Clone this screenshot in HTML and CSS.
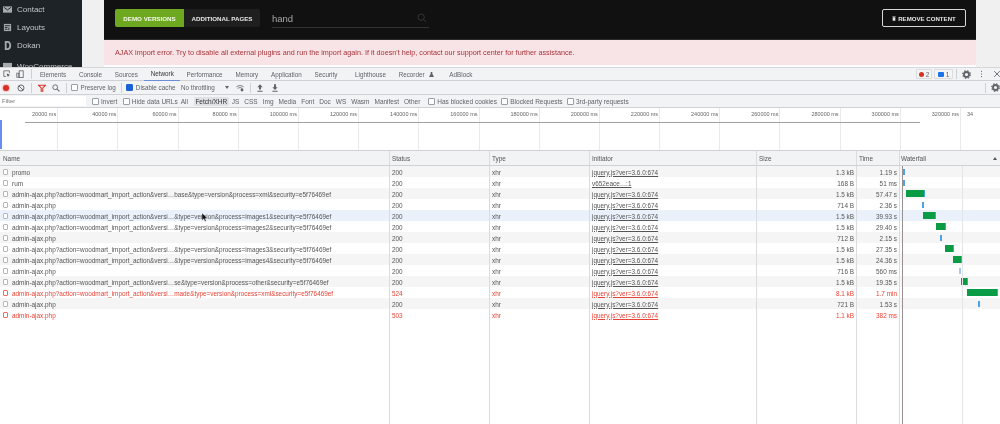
FILE: index.html
```html
<!DOCTYPE html>
<html lang="en">
<head>
<meta charset="utf-8">
<title>Import - Network</title>
<link rel="stylesheet" href="styles.css">
</head>
<body>
<div class="page">
  <section class="site">
    <nav class="side">
      <div class="side-item"><svg class="side-ico" viewBox="0 0 10 10"><path d="M0 1.500h10v7H0z" fill="#a7aaad"/><path d="M1 2.500l4 3 4-3" fill="none" stroke="#1d2327"/></svg>Contact</div>
      <div class="side-item"><svg class="side-ico" viewBox="0 0 10 10"><path d="M1 1h8v8H1z" fill="#a7aaad"/><path d="M2 3h6M2 5h3M2 7h3M6.500 5v3" stroke="#1d2327" fill="none"/></svg>Layouts</div>
      <div class="side-item"><svg class="side-ico" viewBox="0 0 10 10"><path d="M2 0h3c3 0 4 2.500 4 5s-1 5-4 5H2zM4 2v6h1c1.500 0 2-1.500 2-3s-.5-3-2-3z" fill="#a7aaad"/></svg>Dokan</div>
      <div class="side-item side-last"><svg class="side-ico" viewBox="0 0 10 10"><path d="M0 1h10v8H0z" fill="#a7aaad"/></svg>WooCommerce</div>
    </nav>
    <main class="main">
      <div class="panel">
        <div class="btn-green">DEMO VERSIONS</div>
        <div class="btn-dark">ADDITIONAL PAGES</div>
        <div class="search"><span>hand</span><svg class="search-ico" viewBox="0 0 12 12"><circle cx="5" cy="5" r="3.800" fill="none" stroke="#3c3c3c"/><path d="M8 8l3 3" stroke="#3c3c3c"/></svg></div>
        <div class="btn-remove"><svg class="trash" viewBox="0 0 6 7"><path d="M.5 0h5v1h-5zM1 1.500h4V7H1z" fill="#e8e8e8"/></svg>REMOVE CONTENT</div>
      </div>
      <div class="alert">AJAX import error. Try to disable all external plugins and run the import again. If it doesn't help, contact our support center for further assistance.</div>
    </main>
  </section>

  <section class="devtools">
    <div class="tabs">
      <svg class="ico ico-inspect" viewBox="0 0 10 10"><path d="M1 1h7v3M1 1v7h3" fill="none" stroke="#5f6368"/><path d="M4.500 4.500l4.500 1.800-2 .7-.7 2z" fill="#444"/></svg>
      <svg class="ico ico-device" viewBox="0 0 10 10"><rect x="4" y="1" width="5" height="8.500" fill="none" stroke="#5f6368"/><rect x="1" y="4" width="2.500" height="5" fill="none" stroke="#5f6368"/></svg>
      <span class="vsep vsep-tabs"></span>
      <span class="tab">Elements</span>
      <span class="tab">Console</span>
      <span class="tab">Sources</span>
      <span class="tab tab-active">Network</span>
      <span class="tab">Performance</span>
      <span class="tab">Memory</span>
      <span class="tab">Application</span>
      <span class="tab tab-security">Security</span>
      <span class="tab">Lighthouse</span>
      <span class="tab tab-recorder">Recorder<svg class="flask" viewBox="0 0 6 6"><path d="M2 0h2v2l2 4H0l2-4z" fill="#5f6368"/></svg></span>
      <span class="tab">AdBlock</span>
      <span class="tabs-end">
        <span class="badge badge-err"><i class="dot-red"></i>2</span>
        <span class="badge badge-msg"><i class="dot-blue"></i>1</span>
        <span class="vsep"></span>
        <svg class="ico gear" viewBox="0 0 10 10"><circle cx="5" cy="5" r="2.800" fill="none" stroke="#5f6368" stroke-width="2"/><circle cx="5" cy="5" r="4.300" fill="none" stroke="#5f6368" stroke-width="1.200" stroke-dasharray="1.700 1.700"/></svg>
        <svg class="ico dots" viewBox="0 0 4 10"><path d="M2 .8v1.400M2 4.300v1.400M2 7.800v1.400" stroke="#5f6368" stroke-width="1.300"/></svg>
        <svg class="ico close" viewBox="0 0 10 10"><path d="M1.500 1.500l7 7M8.500 1.500l-7 7" stroke="#5f6368" stroke-width="1.100"/></svg>
      </span>
    </div>

    <div class="toolbar">
      <i class="rec"></i>
      <svg class="ico stop" viewBox="0 0 10 10"><circle cx="5" cy="5" r="3.800" fill="none" stroke="#5f6368" stroke-width="1.200"/><path d="M2.500 2.500l5 5" stroke="#5f6368" stroke-width="1.200"/></svg>
      <span class="vsep"></span>
      <svg class="ico funnel" viewBox="0 0 10 10"><path d="M.5 1.500h9L6 5v4H4V5z" fill="none" stroke="#d93025" stroke-width="1.300"/></svg>
      <svg class="ico lens" viewBox="0 0 10 10"><circle cx="4" cy="4" r="3" fill="none" stroke="#5f6368" stroke-width="1.100"/><path d="M6.300 6.300l3 3" stroke="#5f6368" stroke-width="1.300"/></svg>
      <span class="vsep"></span>
      <label class="check check-preserve"><i class="box"></i>Preserve log</label>
      <span class="vsep"></span>
      <label class="check check-cache"><i class="box box-on"></i>Disable cache</label>
      <span class="throttle">No throttling</span>
      <i class="caret"></i>
      <svg class="ico wifi" viewBox="0 0 10 10"><path d="M.5 3.500c2.500-2 6.500-2 9 0M2 5.500c2-1.300 4-1.300 6 0" fill="none" stroke="#5f6368"/><circle cx="7.500" cy="7.500" r="1.800" fill="#5f6368"/></svg>
      <span class="vsep"></span>
      <svg class="ico arrow" viewBox="0 0 8 10"><path d="M4 0l3.500 4H5.300v3H2.700V4H.5zM.5 8.500h7V10h-7z" fill="#5f6368"/></svg>
      <svg class="ico arrow arrow-down" viewBox="0 0 8 10"><path d="M2.700 0h2.600v4h2.200L4 7.500.5 4h2.200zM.5 8.500h7V10h-7z" fill="#5f6368"/></svg>
      <span class="toolbar-end"><span class="vsep"></span><svg class="ico gear" viewBox="0 0 10 10"><circle cx="5" cy="5" r="2.800" fill="none" stroke="#5f6368" stroke-width="2"/><circle cx="5" cy="5" r="4.300" fill="none" stroke="#5f6368" stroke-width="1.200" stroke-dasharray="1.700 1.700"/></svg></span>
    </div>

    <div class="filterbar">
      <span class="filter-input">Filter</span>
      <label class="fcheck fcheck-invert"><i class="box"></i>Invert</label>
      <label class="fcheck fcheck-hide"><i class="box"></i>Hide data URLs</label>
      <span class="ftype">All</span>
      <span class="ftype ftype-on">Fetch/XHR</span>
      <span class="ftype">JS</span>
      <span class="ftype">CSS</span>
      <span class="ftype">Img</span>
      <span class="ftype">Media</span>
      <span class="ftype">Font</span>
      <span class="ftype">Doc</span>
      <span class="ftype">WS</span>
      <span class="ftype">Wasm</span>
      <span class="ftype">Manifest</span>
      <span class="ftype">Other</span>
      <label class="fcheck fcheck-far"><i class="box"></i>Has blocked cookies</label>
      <label class="fcheck fcheck-near"><i class="box"></i>Blocked Requests</label>
      <label class="fcheck fcheck-near"><i class="box"></i>3rd-party requests</label>
    </div>

    <div class="overview">
      <div class="ticks">
        <span>20000 ms</span><span>40000 ms</span><span>60000 ms</span><span>80000 ms</span><span>100000 ms</span><span>120000 ms</span><span>140000 ms</span><span>160000 ms</span><span>180000 ms</span><span>200000 ms</span><span>220000 ms</span><span>240000 ms</span><span>260000 ms</span><span>280000 ms</span><span>300000 ms</span><span>320000 ms</span><span class="tick-last">34</span>
      </div>
      <i class="ov-line"></i>
      <i class="ov-blue"></i>
    </div>

    <div class="table">
      <div class="row head">
        <div class="c name">Name</div><div class="c">Status</div><div class="c">Type</div><div class="c">Initiator</div><div class="c">Size</div><div class="c">Time</div>
        <div class="c wf">Waterfall<i class="sort"></i></div>
      </div>
      <div class="row odd"><div class="c name"><i class="doc"></i>promo</div><div class="c">200</div><div class="c">xhr</div><div class="c"><u>jquery.js?ver=3.6.0:674</u></div><div class="c num">1.3 kB</div><div class="c num">1.19 s</div><div class="c wf"><i class="bar bar-blue" style="margin-left:3px"></i></div></div>
      <div class="row"><div class="c name"><i class="doc"></i>rum</div><div class="c">200</div><div class="c">xhr</div><div class="c"><u>v652eace…:1</u></div><div class="c num">168 B</div><div class="c num">51 ms</div><div class="c wf"><i class="bar bar-blue" style="margin-left:3px"></i></div></div>
      <div class="row odd"><div class="c name"><i class="doc"></i>admin-ajax.php?action=woodmart_import_action&amp;versi…base&amp;type=version&amp;process=xml&amp;security=e5f76469ef</div><div class="c">200</div><div class="c">xhr</div><div class="c"><u>jquery.js?ver=3.6.0:674</u></div><div class="c num">1.5 kB</div><div class="c num">57.47 s</div><div class="c wf"><i class="bar bar-green" style="margin-left:6px;width:19px"></i></div></div>
      <div class="row"><div class="c name"><i class="doc"></i>admin-ajax.php</div><div class="c">200</div><div class="c">xhr</div><div class="c"><u>jquery.js?ver=3.6.0:674</u></div><div class="c num">714 B</div><div class="c num">2.36 s</div><div class="c wf"><i class="bar bar-blue" style="margin-left:22px"></i></div></div>
      <div class="row hover"><div class="c name"><i class="doc"></i>admin-ajax.php?action=woodmart_import_action&amp;versi…&amp;type=version&amp;process=images1&amp;security=e5f76469ef</div><div class="c">200</div><div class="c">xhr</div><div class="c"><u>jquery.js?ver=3.6.0:674</u></div><div class="c num">1.5 kB</div><div class="c num">39.93 s</div><div class="c wf"><i class="bar bar-green" style="margin-left:23px;width:13px"></i></div></div>
      <div class="row"><div class="c name"><i class="doc"></i>admin-ajax.php?action=woodmart_import_action&amp;versi…&amp;type=version&amp;process=images2&amp;security=e5f76469ef</div><div class="c">200</div><div class="c">xhr</div><div class="c"><u>jquery.js?ver=3.6.0:674</u></div><div class="c num">1.5 kB</div><div class="c num">29.40 s</div><div class="c wf"><i class="bar bar-green" style="margin-left:36px;width:10px"></i></div></div>
      <div class="row odd"><div class="c name"><i class="doc"></i>admin-ajax.php</div><div class="c">200</div><div class="c">xhr</div><div class="c"><u>jquery.js?ver=3.6.0:674</u></div><div class="c num">712 B</div><div class="c num">2.15 s</div><div class="c wf"><i class="bar bar-blue" style="margin-left:40px"></i></div></div>
      <div class="row"><div class="c name"><i class="doc"></i>admin-ajax.php?action=woodmart_import_action&amp;versi…&amp;type=version&amp;process=images3&amp;security=e5f76469ef</div><div class="c">200</div><div class="c">xhr</div><div class="c"><u>jquery.js?ver=3.6.0:674</u></div><div class="c num">1.5 kB</div><div class="c num">27.35 s</div><div class="c wf"><i class="bar bar-green" style="margin-left:45px;width:9px"></i></div></div>
      <div class="row odd"><div class="c name"><i class="doc"></i>admin-ajax.php?action=woodmart_import_action&amp;versi…&amp;type=version&amp;process=images4&amp;security=e5f76469ef</div><div class="c">200</div><div class="c">xhr</div><div class="c"><u>jquery.js?ver=3.6.0:674</u></div><div class="c num">1.5 kB</div><div class="c num">24.36 s</div><div class="c wf"><i class="bar bar-green" style="margin-left:53px;width:9px"></i></div></div>
      <div class="row"><div class="c name"><i class="doc"></i>admin-ajax.php</div><div class="c">200</div><div class="c">xhr</div><div class="c"><u>jquery.js?ver=3.6.0:674</u></div><div class="c num">716 B</div><div class="c num">560 ms</div><div class="c wf"><i class="bar bar-pale" style="margin-left:59px"></i></div></div>
      <div class="row odd"><div class="c name"><i class="doc"></i>admin-ajax.php?action=woodmart_import_action&amp;versi…se&amp;type=version&amp;process=other&amp;security=e5f76469ef</div><div class="c">200</div><div class="c">xhr</div><div class="c"><u>jquery.js?ver=3.6.0:674</u></div><div class="c num">1.5 kB</div><div class="c num">19.35 s</div><div class="c wf"><i class="bar bar-green" style="margin-left:61px;width:7px"></i></div></div>
      <div class="row err"><div class="c name"><i class="doc"></i>admin-ajax.php?action=woodmart_import_action&amp;versi…made&amp;type=version&amp;process=xml&amp;security=e5f76469ef</div><div class="c">524</div><div class="c">xhr</div><div class="c"><u>jquery.js?ver=3.6.0:674</u></div><div class="c num">8.1 kB</div><div class="c num">1.7 min</div><div class="c wf"><i class="bar bar-green" style="margin-left:67px;width:31px"></i></div></div>
      <div class="row odd"><div class="c name"><i class="doc"></i>admin-ajax.php</div><div class="c">200</div><div class="c">xhr</div><div class="c"><u>jquery.js?ver=3.6.0:674</u></div><div class="c num">721 B</div><div class="c num">1.53 s</div><div class="c wf"><i class="bar bar-blue" style="margin-left:78px"></i></div></div>
      <div class="row err"><div class="c name"><i class="doc"></i>admin-ajax.php</div><div class="c">503</div><div class="c">xhr</div><div class="c"><u>jquery.js?ver=3.6.0:674</u></div><div class="c num">1.1 kB</div><div class="c num">382 ms</div><div class="c wf"></div></div>
      <div class="row filler"><div class="c name"></div><div class="c"></div><div class="c"></div><div class="c"></div><div class="c"></div><div class="c"></div><div class="c wf"></div></div>
      <i class="wf-mark"></i>
      <i class="wf-grid"></i>
      <svg class="pointer" viewBox="0 0 6 9"><path d="M0 0v7.500l1.800-1.700L3 8.500l1.200-.5L3 5.300h2.500z" fill="#111" stroke="#fff" stroke-width=".4"/></svg>
    </div>
  </section>
</div>
</body>
</html>
```

FILE: styles.css
```css
* { box-sizing: border-box; }
html, body { margin: 0; padding: 0; background: #fff; }
body { width: 1000px; height: 424px; overflow: hidden; font-family: "Liberation Sans", Arial, sans-serif; }
.page { width: 1000px; height: 424px; display: flex; flex-direction: column; overflow: hidden; filter: blur(0.45px); }
i { display: block; font-style: normal; }

/* website above the devtools */
.site { height: 67px; flex: none; display: flex; background: #f0f0f1; overflow: hidden; }
.side { width: 82px; flex: none; background: #1d2327; color: #c3c4c7; font-size: 8px; }
.side-item { height: 18px; display: flex; align-items: center; padding-left: 3px; gap: 5px; white-space: nowrap; }
.side-last { margin-top: 3px; }
.side-ico { width: 9px; height: 9px; flex: none; }
.main { width: 872px; margin-left: 22px; flex: none; background: #fff; }
.panel { height: 40px; background: #111; border-bottom: 1px solid #2a2a2a; display: flex; align-items: flex-start; padding: 9px 10px 0 11px; }
.btn-green { width: 69px; height: 18px; background: #6da820; color: #f4f9e8; font-size: 6.200px; font-weight: 700; display: flex; align-items: center; justify-content: center; border-radius: 2px 0 0 2px; }
.btn-dark { width: 76px; height: 18px; background: #1f1f1f; color: #e6e6e6; font-size: 6.200px; font-weight: 700; display: flex; align-items: center; justify-content: center; border-radius: 0 2px 2px 0; }
.search { width: 157px; height: 19px; margin-left: 12px; border-bottom: 1px solid #333; color: #a8a8a8; font-size: 9.500px; display: flex; align-items: center; justify-content: space-between; padding-right: 2px; }
.search-ico { width: 10px; height: 10px; }
.btn-remove { width: 84px; height: 18px; margin-left: auto; border: 1px solid #d8d8d8; border-radius: 2px; color: #e8e8e8; font-size: 6.100px; font-weight: 700; display: flex; align-items: center; justify-content: center; gap: 2px; }
.trash { width: 4px; height: 5px; }
.alert { height: 25px; background: #f8e4e6; color: #a8343a; font-size: 7.230px; display: flex; align-items: center; padding-left: 11px; white-space: nowrap; }

/* devtools */
.devtools { flex: 1; display: flex; flex-direction: column; min-height: 0; font-size: 6.300px; color: #5f6368; background: #fff; }
.tabs { height: 14px; flex: none; background: #f1f3f4; border-top: 1px solid #d5d7da; border-bottom: 1px solid #cfd1d4; display: flex; align-items: center; padding-left: 3px; white-space: nowrap; }
.ico { flex: none; width: 8px; height: 8px; }
.ico-device { margin-left: 5px; }
.vsep { flex: none; width: 1px; height: 10px; background: #cdd0d4; display: block; }
.vsep-tabs { margin: 0 2px 0 6.500px; }
.tab { height: 13px; line-height: 13px; padding: 0 6.400px; display: flex; align-items: center; gap: 4px; }
.tab-security { margin-right: 5px; }
.tab-active { color: #333; border-bottom: 1px solid #6a8fd8; }
.flask { width: 5px; height: 5px; margin-right: 3px; }
.tabs-end { margin-left: auto; display: flex; align-items: center; }
.badge { height: 10px; border: 1px solid #dadce0; background: #f5f5f5; border-radius: 1px; display: flex; align-items: center; justify-content: center; gap: 1.500px; font-size: 6.500px; }
.badge-err { width: 16px; margin-right: 2px; }
.badge-msg { width: 19px; }
.dot-red { width: 5px; height: 5px; border-radius: 50%; background: #d93025; }
.dot-blue { width: 6px; height: 5px; background: #1a73e8; border-radius: 1px; }
.tabs-end .vsep { margin: 0 4.500px 0 2.700px; }
.gear { width: 9px; height: 9px; }
.dots { width: 3px; height: 8px; margin-left: 9.500px; }
.close { margin-left: 10px; margin-right: -1px; }

.toolbar { height: 14px; flex: none; background: #f1f3f4; border-bottom: 1px solid #cfd1d4; display: flex; align-items: center; padding-left: 3px; white-space: nowrap; }
.rec { width: 6px; height: 6px; border-radius: 50%; background: #d93025; box-shadow: 0 0 0 1px #f5c6c2; flex: none; }
.stop { margin-left: 8px; }
.toolbar .vsep { margin-left: 6px; margin-right: 6px; }
.funnel { margin-left: -.5px; }
.lens { margin-left: 6px; }
.check { display: flex; align-items: center; gap: 3px; }
.check-preserve { margin-left: -2px; margin-right: -1px; }
.check-cache { margin-left: -2px; }
.box { width: 7px; height: 7px; flex: none; background: #fff; border: 1px solid #9a9ea3; border-radius: 1px; }
.box-on { background: #1a62d6; border-color: #1a62d6; }
.throttle { margin-left: 5.500px; }
.caret { width: 0; height: 0; border-left: 2px solid transparent; border-right: 2px solid transparent; border-top: 3px solid #5f6368; margin-left: 10px; }
.wifi { margin-left: 7px; }
.arrow { width: 6px; }
.arrow-down { margin-left: 9px; }
.toolbar-end { margin-left: auto; display: flex; align-items: center; }
.toolbar-end .vsep { margin-right: 5px; }

.filterbar { height: 13px; flex: none; background: #f1f3f4; border-bottom: 1px solid #cfd1d4; display: flex; align-items: center; white-space: nowrap; font-size: 6.500px; }
.filter-input { width: 86px; height: 10px; line-height: 10px; background: #fff; padding-left: 2px; color: #777; font-size: 6px; }
.fcheck { display: flex; align-items: center; gap: 2px; margin-left: 5px; }
.fcheck-invert { margin-left: 6px; }
.fcheck-hide { margin-left: 5.500px; }
.fcheck-far { margin-left: 6px; }
.fcheck-near { margin-left: 4.300px; }
.ftype { padding: 0 2px; height: 9px; line-height: 9px; margin-left: 1px; }
.ftype-on { background: #dfe1e5; color: #333; padding: 0 1.500px; margin-left: 4px; border-radius: 2px; }

.overview { height: 43px; flex: none; position: relative; border-bottom: 1px solid #cfd1d4; overflow: hidden; background: #fff; }
.ticks { display: flex; height: 100%; margin-left: -2px; }
.ticks span { width: 60.200px; flex: none; height: 100%; border-right: 1px solid #e8eaed; text-align: right; padding: 0 1px 0 0; font-size: 5.500px; line-height: 12px; color: #666; }
.ticks span.tick-last { border-right: 0; text-align: left; padding-left: 6px; }
.ov-line { position: absolute; left: 25px; top: 13.500px; width: 895px; height: 1.500px; background: #a0a0a0; }
.ov-blue { position: absolute; left: 0; top: 12px; width: 1.500px; height: 29px; background: #6a8cf0; }

.table { flex: 1; position: relative; min-height: 0; overflow: hidden; background: #fff; }
.row { height: 11px; display: grid; grid-template-columns: 390px 100px 100px 167px 100px 43px 100px; align-items: stretch; color: #555; font-size: 6.400px; white-space: nowrap; }
.row.head { height: 15px; background: #f1f3f4; border-bottom: 1px solid #cfd1d4; color: #555; }
.row.odd { background: #f5f5f5; }
.row.hover { background: #eaf1fb; }
.row.err { color: #ea4335; }
.row.filler { height: 110px; }
.c { border-right: 1px solid #dadce0; padding: 1px 2px 0; display: flex; align-items: center; overflow: hidden; }
.head .c { padding-top: 0; }
.c.num { justify-content: flex-end; padding-right: 2px; }
.c.name { padding-left: 3px; }
.c.wf { border-right: 0; padding: 0; }
.head .c.wf { padding-left: 1px; justify-content: space-between; padding-right: 3px; }
.sort { width: 0; height: 0; border-left: 2px solid transparent; border-right: 2px solid transparent; border-bottom: 3px solid #555; }
.doc { width: 5px; height: 6px; border: 1px solid #b5b7ba; border-radius: 1px; margin-right: 4px; flex: none; background: #fff; }
.err .doc { border-color: #ef6c63; }
u { text-decoration: underline; }
.bar { display: block; height: 6px; }
.bar-blue { width: 2px; background: #4aa3e8; }
.bar-pale { width: 2px; background: #a8cbee; }
.bar-green { background: #0a9c45; border-right: 1px solid #3aa6e0; height: 7px; }
.wf-mark { position: absolute; left: 902px; top: 15px; width: 1px; height: 100%; background: #9a8f8f; }
.wf-grid { position: absolute; left: 962px; top: 15px; width: 1px; height: 100%; background: #e3e5e8; }
.pointer { position: absolute; left: 202px; top: 62px; width: 6px; height: 9px; }
```
